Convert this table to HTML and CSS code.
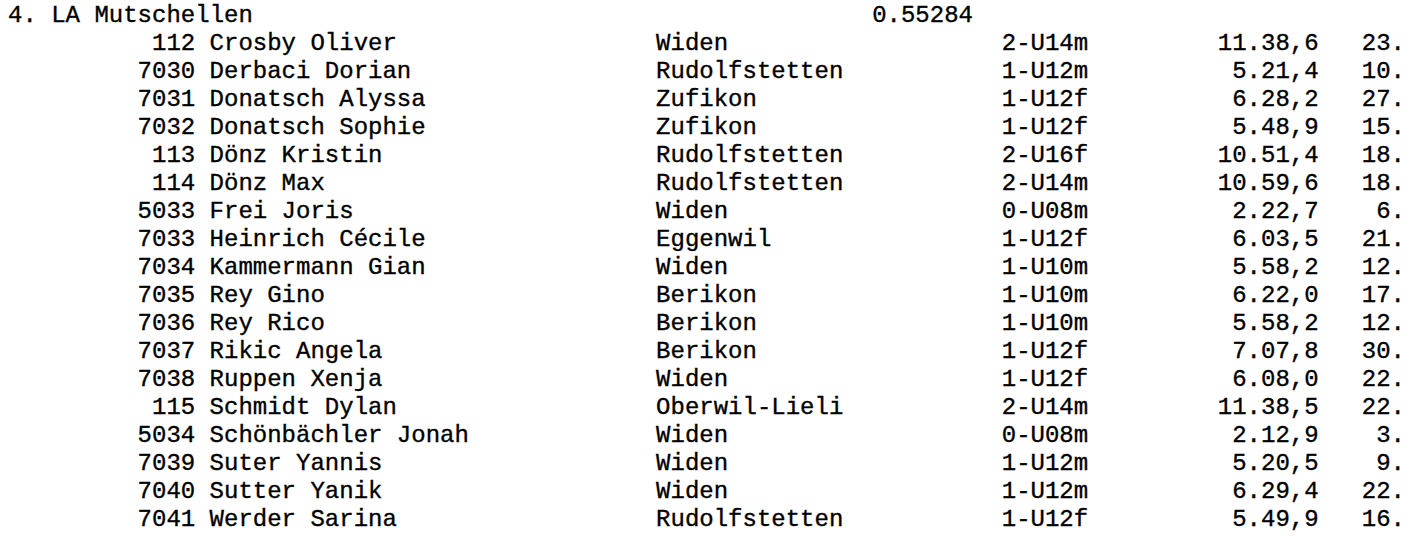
FILE: index.html
```html
<!DOCTYPE html>
<html lang="de">
<head>
<meta charset="utf-8">
<title>LA Mutschellen</title>
<link rel="stylesheet" href="styles.css">
</head>
<body>
<div class="list">
  <div class="head"><span>4. LA Mutschellen</span><span>0.55284</span></div>
  <div class="row"><span class="nr">112</span><span class="name">Crosby Oliver</span><span>Widen</span><span>2-U14m</span><span class="r">11.38,6</span><span class="r">23.</span></div>
  <div class="row"><span class="nr">7030</span><span class="name">Derbaci Dorian</span><span>Rudolfstetten</span><span>1-U12m</span><span class="r">5.21,4</span><span class="r">10.</span></div>
  <div class="row"><span class="nr">7031</span><span class="name">Donatsch Alyssa</span><span>Zufikon</span><span>1-U12f</span><span class="r">6.28,2</span><span class="r">27.</span></div>
  <div class="row"><span class="nr">7032</span><span class="name">Donatsch Sophie</span><span>Zufikon</span><span>1-U12f</span><span class="r">5.48,9</span><span class="r">15.</span></div>
  <div class="row"><span class="nr">113</span><span class="name">Dönz Kristin</span><span>Rudolfstetten</span><span>2-U16f</span><span class="r">10.51,4</span><span class="r">18.</span></div>
  <div class="row"><span class="nr">114</span><span class="name">Dönz Max</span><span>Rudolfstetten</span><span>2-U14m</span><span class="r">10.59,6</span><span class="r">18.</span></div>
  <div class="row"><span class="nr">5033</span><span class="name">Frei Joris</span><span>Widen</span><span>0-U08m</span><span class="r">2.22,7</span><span class="r">6.</span></div>
  <div class="row"><span class="nr">7033</span><span class="name">Heinrich Cécile</span><span>Eggenwil</span><span>1-U12f</span><span class="r">6.03,5</span><span class="r">21.</span></div>
  <div class="row"><span class="nr">7034</span><span class="name">Kammermann Gian</span><span>Widen</span><span>1-U10m</span><span class="r">5.58,2</span><span class="r">12.</span></div>
  <div class="row"><span class="nr">7035</span><span class="name">Rey Gino</span><span>Berikon</span><span>1-U10m</span><span class="r">6.22,0</span><span class="r">17.</span></div>
  <div class="row"><span class="nr">7036</span><span class="name">Rey Rico</span><span>Berikon</span><span>1-U10m</span><span class="r">5.58,2</span><span class="r">12.</span></div>
  <div class="row"><span class="nr">7037</span><span class="name">Rikic Angela</span><span>Berikon</span><span>1-U12f</span><span class="r">7.07,8</span><span class="r">30.</span></div>
  <div class="row"><span class="nr">7038</span><span class="name">Ruppen Xenja</span><span>Widen</span><span>1-U12f</span><span class="r">6.08,0</span><span class="r">22.</span></div>
  <div class="row"><span class="nr">115</span><span class="name">Schmidt Dylan</span><span>Oberwil-Lieli</span><span>2-U14m</span><span class="r">11.38,5</span><span class="r">22.</span></div>
  <div class="row"><span class="nr">5034</span><span class="name">Schönbächler Jonah</span><span>Widen</span><span>0-U08m</span><span class="r">2.12,9</span><span class="r">3.</span></div>
  <div class="row"><span class="nr">7039</span><span class="name">Suter Yannis</span><span>Widen</span><span>1-U12m</span><span class="r">5.20,5</span><span class="r">9.</span></div>
  <div class="row"><span class="nr">7040</span><span class="name">Sutter Yanik</span><span>Widen</span><span>1-U12m</span><span class="r">6.29,4</span><span class="r">22.</span></div>
  <div class="row"><span class="nr">7041</span><span class="name">Werder Sarina</span><span>Rudolfstetten</span><span>1-U12f</span><span class="r">5.49,9</span><span class="r">16.</span></div>
</div>
</body>
</html>
```
FILE: styles.css
```css
html, body {
  background: #ffffff;
}
body {
  margin: 0;
  padding: 2px 0 0 8px;
  color: #000000;
  font-family: "Liberation Mono", "Courier New", monospace;
  font-size: 24px;
  line-height: 28px;
  -webkit-text-stroke: 0.35px #000000;
}
.list {
  display: flex;
  flex-direction: column;
}
.head {
  display: grid;
  grid-template-columns: 60ch auto;
  white-space: pre;
}
.row {
  display: grid;
  grid-template-columns: 13ch 32ch 24ch 6ch 16ch 6ch;
  white-space: pre;
}
.nr, .r {
  text-align: right;
}
.name {
  padding-left: 1ch;
}
```
